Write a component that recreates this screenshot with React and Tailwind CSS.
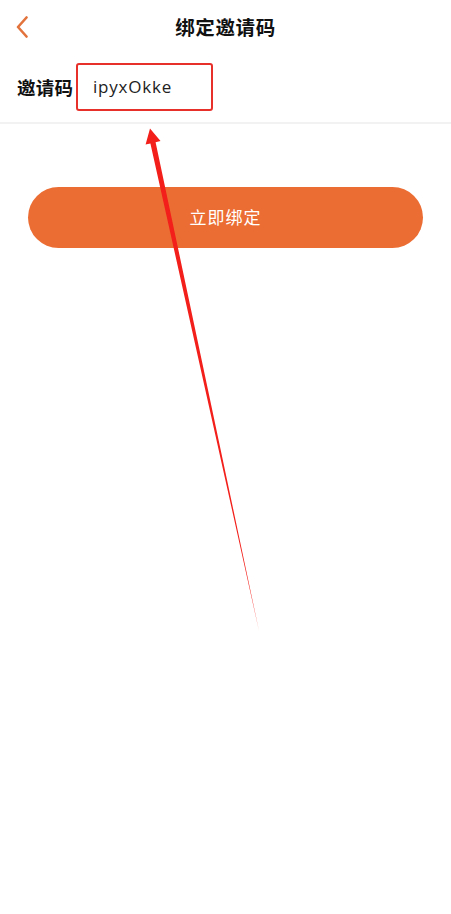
import React from "react";

export default function App() {
  return (
    <div className="relative w-[451px] h-[914px] bg-white overflow-hidden" style={{ fontFamily: '"Noto Sans", "Noto Sans CJK SC", sans-serif' }}>
      {/* Header */}
      <div className="relative h-[56px] flex items-center justify-center">
        <button className="absolute left-[12px] top-[14px] w-[20px] h-[26px] flex items-center justify-center">
          <svg width="14" height="22" viewBox="0 0 14 22" fill="none">
            <path d="M11.5 1.5 L3 11 L11.5 20.5" stroke="#e2733c" strokeWidth="2.6" strokeLinecap="round" strokeLinejoin="round" />
          </svg>
        </button>
        <h1 className="text-[19.5px] font-bold text-[#111] tracking-[0.6px]">绑定邀请码</h1>
      </div>

      {/* Invite code row */}
      <div className="h-[68px] flex items-center pl-[17px] pb-[2px] border-b-2 border-[#f2f2f2]">
        <span className="text-[18.5px] font-bold text-[#111] w-[59px] tracking-[0.3px]">邀请码</span>
        <div className="w-[137px] h-[48px] border-[2.5px] border-[#e8302b] rounded-[3px] flex items-center pl-[15px] -mt-[2px]">
          <span className="text-[17px] text-[#222] tracking-[0.8px]" style={{ fontFamily: '"Open Sans", "Noto Sans", sans-serif' }}>ipyxOkke</span>
        </div>
      </div>

      {/* Button */}
      <div className="px-[28px] pt-[63px]">
        <button className="w-full h-[61px] rounded-full bg-[#ec6d33] text-white text-[17px] tracking-[1px] flex items-center justify-center">
          立即绑定
        </button>
      </div>

      {/* Red arrow annotation */}
      <svg className="absolute inset-0 pointer-events-none" width="451" height="914" viewBox="0 0 451 914">
        <polygon
          points="150,128.5 160.5,141 155.6,142.2 259,631 150.4,143.4 145.6,144.6"
          fill="#f21f1a"
        />
      </svg>
    </div>
  );
}
